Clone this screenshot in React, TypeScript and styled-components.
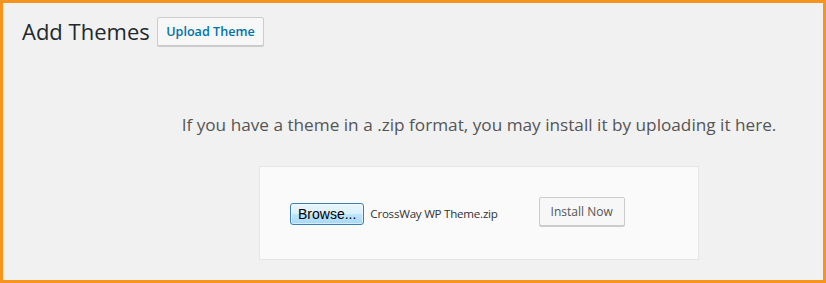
import React from "react";
import styled, { createGlobalStyle } from "styled-components";

const GlobalStyle = createGlobalStyle`
  html, body {
    margin: 0;
    padding: 0;
    background: #f1f1f1;
  }
  body {
    font-family: "Open Sans", "Noto Sans", "Liberation Sans", sans-serif;
  }
`;

const Frame = styled.div`
  box-sizing: border-box;
  width: 826px;
  height: 283px;
  border: 3px solid #f7941d;
  background: #f1f1f1;
  overflow: hidden;
`;

const Header = styled.div`
  display: flex;
  align-items: center;
  gap: 7px;
  padding: 14px 0 0 19px;
`;

const Title = styled.h1`
  margin: 0;
  font-size: 22px;
  font-weight: 400;
  line-height: 29px;
  color: #23282d;
`;

const Button = styled.button<{ $accent?: boolean }>`
  box-sizing: border-box;
  height: 29px;
  padding: 0 ${(p) => (p.$accent ? 8.5 : 11)}px;
  border: 1px solid #cccccc;
  border-radius: 2px;
  background: #f7f7f7;
  box-shadow: 0 1px 0 #cccccc;
  font-family: "Open Sans", "Noto Sans", sans-serif;
  font-size: ${(p) => (p.$accent ? 12.6 : 12)}px;
  font-weight: ${(p) => (p.$accent ? 600 : 400)};
  color: ${(p) => (p.$accent ? "#0073aa" : "#555555")};
  cursor: pointer;
`;

const UploadArea = styled.div`
  display: flex;
  flex-direction: column;
  align-items: center;
  padding: 67px 0 0 132px;
`;

const Description = styled.p`
  margin: 0;
  font-size: 17.2px;
  line-height: 24px;
  color: #555555;
`;

const UploadForm = styled.form`
  box-sizing: border-box;
  width: 440px;
  height: 94px;
  margin-top: 29px;
  padding: 0 30px 4px;
  display: flex;
  align-items: center;
  background: #fafafa;
  border: 1px solid #e5e5e5;
`;

const FilePicker = styled.div`
  display: flex;
  align-items: center;
  gap: 6px;
  margin: 5px 41px 0 0;
`;

const BrowseButton = styled.span`
  box-sizing: border-box;
  height: 22px;
  padding: 0 7px;
  display: inline-flex;
  align-items: center;
  border: 1px solid #3c7fb1;
  border-radius: 3px;
  background: linear-gradient(#eaf6fd, #d9f0fc 50%, #bee6fd 51%, #a7d9f5);
  box-shadow: inset 0 0 0 1px #ffffff80;
  font-family: "Liberation Sans", "DejaVu Sans", sans-serif;
  font-size: 14px;
  color: #000000;
`;

const FileName = styled.span`
  font-size: 11.6px;
  letter-spacing: -0.25px;
  color: #333333;
`;

export default function App() {
  return (
    <>
      <GlobalStyle />
      <Frame>
        <Header>
          <Title>Add Themes</Title>
          <Button type="button" $accent>
            Upload Theme
          </Button>
        </Header>
        <UploadArea>
          <Description>
            If you have a theme in a .zip format, you may install it by uploading it here.
          </Description>
          <UploadForm onSubmit={(e) => e.preventDefault()}>
            <FilePicker>
              <BrowseButton>Browse...</BrowseButton>
              <FileName>CrossWay WP Theme.zip</FileName>
            </FilePicker>
            <Button type="submit">Install Now</Button>
          </UploadForm>
        </UploadArea>
      </Frame>
    </>
  );
}
